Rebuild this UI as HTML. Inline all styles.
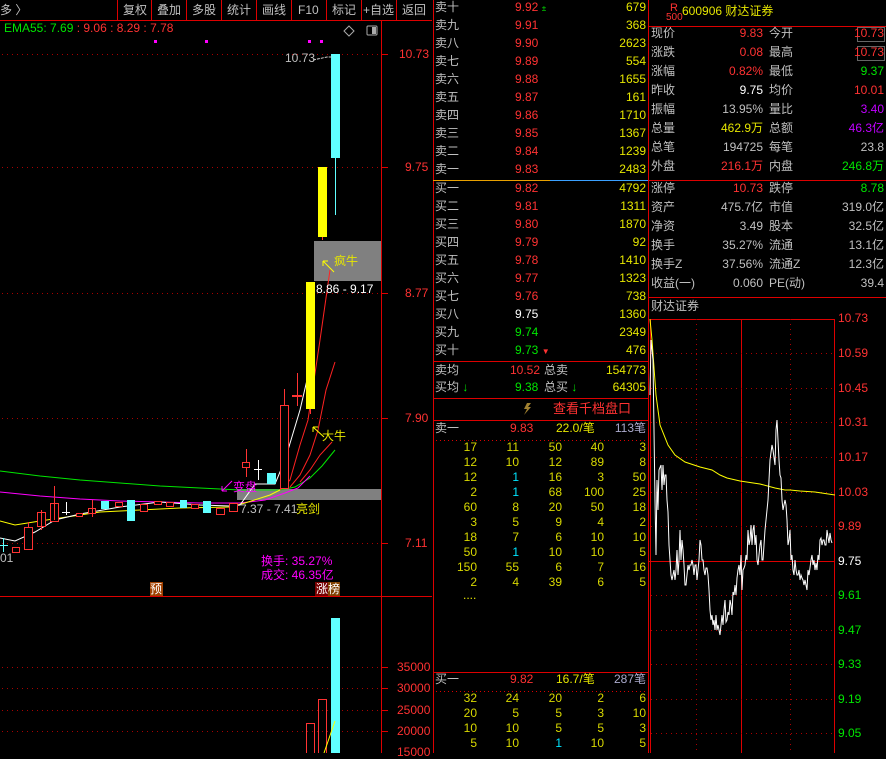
<!DOCTYPE html><html><head><meta charset="utf-8"><style>
*{margin:0;padding:0;box-sizing:border-box}
body{width:886px;height:753px;background:#000;overflow:hidden;position:relative;font-family:"Liberation Sans","Noto Sans CJK SC",sans-serif;font-size:12px;color:#c0c0c0}
.t{position:absolute;white-space:nowrap;line-height:14px}
.r{color:#ff3232}.y{color:#e6e600}.g{color:#00e600}.w{color:#fff}.c{color:#00e5ff}.m{color:#ff00ff}.gr{color:#c0c0c0}
.ra{text-align:right}
svg{position:absolute;left:0;top:0}
</style></head><body>
<svg width="886" height="753">
<!-- toolbar -->
<line x1="0" y1="20.5" x2="432" y2="20.5" stroke="#d00" />
<g stroke="#d00"><line x1="117.5" y1="0" x2="117.5" y2="20"/><line x1="151.5" y1="0" x2="151.5" y2="20"/><line x1="186.5" y1="0" x2="186.5" y2="20"/><line x1="221.5" y1="0" x2="221.5" y2="20"/><line x1="256.5" y1="0" x2="256.5" y2="20"/><line x1="291.5" y1="0" x2="291.5" y2="20"/><line x1="326.5" y1="0" x2="326.5" y2="20"/><line x1="361.5" y1="0" x2="361.5" y2="20"/><line x1="396.5" y1="0" x2="396.5" y2="20"/></g>
<!-- main chart axes -->
<line x1="381.5" y1="21" x2="381.5" y2="753" stroke="#d00"/>
<line x1="0" y1="596.5" x2="432" y2="596.5" stroke="#d00"/>
<g stroke="#a00" stroke-dasharray="1,4">
<line x1="2" y1="54.5" x2="381" y2="54.5"/><line x1="2" y1="167.5" x2="381" y2="167.5"/><line x1="2" y1="293.5" x2="381" y2="293.5"/><line x1="2" y1="418.5" x2="381" y2="418.5"/><line x1="2" y1="543.5" x2="381" y2="543.5"/>
<line x1="2" y1="667.5" x2="381" y2="667.5"/><line x1="2" y1="688.5" x2="381" y2="688.5"/><line x1="2" y1="710.5" x2="381" y2="710.5"/><line x1="2" y1="731.5" x2="381" y2="731.5"/>
</g>
<g stroke="#d00"><line x1="381" y1="54.5" x2="388" y2="54.5"/><line x1="381" y1="167.5" x2="388" y2="167.5"/><line x1="381" y1="293.5" x2="388" y2="293.5"/><line x1="381" y1="418.5" x2="388" y2="418.5"/><line x1="381" y1="543.5" x2="388" y2="543.5"/><line x1="381" y1="667.5" x2="388" y2="667.5"/><line x1="381" y1="688.5" x2="388" y2="688.5"/><line x1="381" y1="710.5" x2="388" y2="710.5"/><line x1="381" y1="731.5" x2="388" y2="731.5"/></g>
<g fill="#f0f"><rect x="154" y="40" width="3" height="3"/><rect x="205" y="40" width="3" height="3"/><rect x="308" y="40" width="3" height="3"/><rect x="320" y="40" width="3" height="3"/></g>
<path d="M349 26 l5 5 l-5 5 l-5 -5z" fill="none" stroke="#aaa"/>
<rect x="367" y="26" width="10" height="9" rx="1" fill="none" stroke="#aaa"/><rect x="372" y="27" width="4" height="7" fill="#aaa"/>
<!-- gray boxes -->
<rect x="314" y="241" width="67" height="40" fill="#808080"/>
<rect x="237" y="489" width="144" height="11" fill="#808080"/>
<!-- MAs -->
<polyline fill="none" stroke="#00e600" points="0,471 40,476 80,480 120,483 160,486 200,488 240,490 280,490 295,487 310,478 322,466 335,450"/>
<polyline fill="none" stroke="#f0f" points="0,492 40,496 80,499 120,501 160,502 200,503 240,503 265,500 285,493 298,488 310,476"/>
<polyline fill="none" stroke="#ff0" points="0,521 15,525 40,521 60,518 100,512 140,510 180,508 230,507 245,503 270,495 280,490 285,482"/>
<polyline fill="none" stroke="#fff" points="0,538 15,541 35,532 55,520 80,514 120,507 160,502 200,505 230,506 240,505 255,484 275,484 285,460 300,410 310,367"/>
<polyline fill="none" stroke="#f22" points="280,490 290,480 300,445 308,420 320,340 330,270"/>
<polyline fill="none" stroke="#f22" points="290,487 300,475 310,455 318,430 326,390 335,362"/>
<polyline fill="none" stroke="#f22" points="300,482 310,470 320,455 332,442"/>
<!-- candles -->
<g stroke="#f33" fill="#000">
<rect x="12.5" y="547.5" width="7" height="5"/>
<rect x="24.5" y="527.5" width="8" height="22"/><line x1="28.5" y1="522" x2="28.5" y2="527"/>
<rect x="37.5" y="512.5" width="8" height="14"/><line x1="41.5" y1="510" x2="41.5" y2="530"/>
<rect x="50.5" y="503.5" width="8" height="18"/><line x1="54.5" y1="486" x2="54.5" y2="520"/>
<rect x="76.5" y="513.5" width="6" height="3"/>
<rect x="88.5" y="508.5" width="7" height="5"/><line x1="92.5" y1="500" x2="92.5" y2="517"/>
<rect x="115.5" y="502.5" width="7" height="4"/>
<rect x="140.5" y="504.5" width="7" height="7"/>
<rect x="154.5" y="501.5" width="7" height="3"/>
<rect x="166.5" y="502.5" width="7" height="4"/>
<rect x="191.5" y="504.5" width="7" height="4"/>
<rect x="216.5" y="508.5" width="8" height="6"/>
<rect x="229.5" y="503.5" width="8" height="8"/>
<rect x="242.5" y="462.5" width="7" height="5"/><line x1="246.5" y1="449" x2="246.5" y2="462"/><line x1="246.5" y1="468" x2="246.5" y2="477"/>
<rect x="280.5" y="405.5" width="8" height="83"/><line x1="284.5" y1="389" x2="284.5" y2="405"/>
<line x1="292" y1="396" x2="302" y2="396" stroke-width="2"/><line x1="297.5" y1="373" x2="297.5" y2="406"/>
<line x1="322.5" y1="237" x2="322.5" y2="240"/><line x1="310.5" y1="409" x2="310.5" y2="414"/>
</g>
<g fill="#60ffff">
<rect x="101" y="501" width="8" height="8"/><rect x="127" y="500" width="8" height="21"/><rect x="180" y="500" width="7" height="8"/><rect x="203" y="501" width="8" height="12"/><rect x="267" y="473" width="9" height="11"/>
<rect x="331" y="54" width="9" height="104"/><rect x="335" y="157" width="1" height="58"/>
<rect x="331" y="618" width="9" height="135"/>
</g>
<g stroke="#60ffff"><line x1="0" y1="545.5" x2="8" y2="545.5"/><line x1="3.5" y1="538" x2="3.5" y2="552"/></g>
<g stroke="#fff"><line x1="62" y1="512.5" x2="70" y2="512.5"/><line x1="66.5" y1="502" x2="66.5" y2="515"/><line x1="254" y1="469.5" x2="262" y2="469.5"/><line x1="258.5" y1="460" x2="258.5" y2="480"/></g>
<g fill="#ff0"><rect x="306" y="282" width="9" height="127"/><rect x="318" y="167" width="9" height="70"/></g>
<path d="M313 60 l14 -3 l5 0" stroke="#ccc" fill="none" stroke-dasharray="3,1"/>
<g fill="none" stroke="#f33"><rect x="306.5" y="723.5" width="8" height="30"/><rect x="318.5" y="699.5" width="8" height="54"/></g>
<line x1="324" y1="753" x2="335" y2="721" stroke="#ff0"/>
<!-- arrows -->
<path d="M334 272 l-11 -11 M323 261 l0 5 M323 261 l5 0" stroke="#ff0" fill="none"/>
<path d="M324 437 l-11 -10 M313 427 l0 5 M313 427 l5 0" stroke="#ff0" fill="none"/>
<path d="M232 481 l-10 10 M222 491 l0 -5 M222 491 l5 0" stroke="#f0f" fill="none"/>
<!-- labels boxes -->
<rect x="150" y="582" width="13" height="14" fill="#a04000"/>
<rect x="315" y="582" width="14" height="14" fill="#700"/><rect x="328" y="582" width="12" height="14" fill="#804000"/>
<!-- order book -->
<line x1="433.5" y1="0" x2="433.5" y2="753" stroke="#d00"/>
<line x1="648.5" y1="0" x2="648.5" y2="753" stroke="#d00"/>
<line x1="433" y1="180.5" x2="550" y2="180.5" stroke="#e8a000"/><line x1="550" y1="180.5" x2="648" y2="180.5" stroke="#3aa0ff"/>
<g stroke="#d00"><line x1="433" y1="361.5" x2="648" y2="361.5"/><line x1="433" y1="398.5" x2="648" y2="398.5"/><line x1="433" y1="420.5" x2="648" y2="420.5"/><line x1="433" y1="672.5" x2="648" y2="672.5"/></g>
<g stroke="#d00" stroke-dasharray="1,3"><line x1="436" y1="440.5" x2="648" y2="440.5"/><line x1="436" y1="691.5" x2="648" y2="691.5"/></g>
<path d="M527 403 l-3 6 l3 0 l-3 6 l7 -8 l-3 0 l3 -4z" fill="#a08030"/>
<!-- right panel -->
<g stroke="#d00"><line x1="648" y1="26.5" x2="886" y2="26.5"/><line x1="648" y1="180.5" x2="886" y2="180.5"/><line x1="648" y1="297.5" x2="886" y2="297.5"/></g>
<g fill="none" stroke="#666"><rect x="857.5" y="27.5" width="27" height="14"/><rect x="857.5" y="46.5" width="27" height="14"/></g>
<rect x="650.5" y="319.5" width="184" height="440" fill="none" stroke="#d00"/>
<line x1="741.5" y1="319" x2="741.5" y2="753" stroke="#d00"/>
<g stroke="#a00" stroke-dasharray="1,4">
<line x1="696.5" y1="319" x2="696.5" y2="753"/><line x1="790.5" y1="319" x2="790.5" y2="753"/>
<line x1="651" y1="353.5" x2="834" y2="353.5"/><line x1="651" y1="388.5" x2="834" y2="388.5"/><line x1="651" y1="422.5" x2="834" y2="422.5"/><line x1="651" y1="457.5" x2="834" y2="457.5"/><line x1="651" y1="492.5" x2="834" y2="492.5"/><line x1="651" y1="526.5" x2="834" y2="526.5"/><line x1="651" y1="595.5" x2="834" y2="595.5"/><line x1="651" y1="630.5" x2="834" y2="630.5"/><line x1="651" y1="664.5" x2="834" y2="664.5"/><line x1="651" y1="699.5" x2="834" y2="699.5"/><line x1="651" y1="733.5" x2="834" y2="733.5"/>
</g>
<line x1="648" y1="561.5" x2="834" y2="561.5" stroke="#d00"/>
<polyline fill="none" stroke="#ff0" points="650,319 652,340 656,395 660,425 668,445 675,455 685,462 700,467 712,470 720,475 727,478 740,481 760,484 775,488 785,490 790,490 800,491 815,492 835,495"/>
<polyline fill="none" stroke="#fff" points="650,395 651,340 653,360 655,500 656,555 657,480 658,510 659,470 661,465 662,490 663,465 664,485 665,475 666,475 667,500 668,512 669,545 670,560 671,575 672,580 673,575 674,570 675,580 676,570 677,550 678,575 679,560 680,530 681,560 682,540 683,550 684,565 685,585 686,585 687,575 688,565 689,570 690,565 691,565 692,560 693,565 694,575 695,565 696,565 697,580 698,570 699,560 700,540 701,545 702,560 703,560 704,570 705,575 706,568 707,568 708,575 709,590 710,610 711,620 712,615 713,625 714,620 715,630 716,615 717,630 718,625 719,630 720,635 721,625 722,615 723,625 724,610 725,600 726,622 727,620 728,612 729,615 730,600 731,605 732,615 733,592 734,595 735,585 736,595 737,578 738,570 739,565 740,575 741,555 742,590 743,570 744,568 745,565 746,555 747,560 748,530 749,545 750,540 751,525 752,545 753,530 754,525 755,545 756,535 757,560 758,565 759,555 760,545 761,540 762,560 763,560 764,545 765,530 766,520 767,510 768,500 769,480 770,460 772,445 773,450 775,465 776,430 777,420 778,440 779,460 780,475 781,478 782,500 783,510 784,505 785,500 786,505 787,520 788,545 789,540 790,530 791,560 792,555 793,570 794,575 795,560 796,570 797,575 798,575 799,570 800,580 801,575 802,578 803,580 804,585 805,580 806,585 807,590 808,570 809,575 810,568 811,560 812,555 813,565 814,560 815,570 816,563 817,570 818,555 819,560 820,540 821,538 822,545 823,540 824,540 825,545 826,545 827,530 828,537 829,543 830,533 831,540 832,543"/>
</svg>

<!-- toolbar text -->
<div class="t gr" style="left:0;top:3px">多 〉</div>
<div class="t gr" style="left:123px;top:3px">复权</div><div class="t gr" style="left:157px;top:3px">叠加</div><div class="t gr" style="left:192px;top:3px">多股</div><div class="t gr" style="left:227px;top:3px">统计</div><div class="t gr" style="left:262px;top:3px">画线</div><div class="t gr" style="left:298px;top:3px">F10</div><div class="t gr" style="left:332px;top:3px">标记</div><div class="t gr" style="left:363px;top:3px">+自选</div><div class="t gr" style="left:402px;top:3px">返回</div>
<div class="t" style="left:4px;top:21px"><span class="g">EMA55: 7.69</span> <span class="r">: 9.06 : 8.29 : 7.78</span></div>
<div class="t gr" style="left:285px;top:51px">10.73</div>
<div class="t w" style="left:316px;top:282px">8.86 - 9.17</div>
<div class="t y" style="left:334px;top:254px">疯牛</div>
<div class="t y" style="left:322px;top:429px">大牛</div>
<div class="t m" style="left:233px;top:480px">变盘</div>
<div class="t gr" style="left:240px;top:502px">7.37 - 7.41</div>
<div class="t y" style="left:296px;top:502px">亮剑</div>
<div class="t gr" style="left:0;top:551px">01</div>
<div class="t m" style="left:261px;top:554px">换手: 35.27%</div>
<div class="t m" style="left:261px;top:568px">成交: 46.35亿</div>
<div class="t w" style="left:150px;top:582px">预</div><div class="t w" style="left:316px;top:582px">涨榜</div>
<!-- main axis -->
<div class="t r" style="left:399px;top:47px">10.73</div><div class="t r" style="left:405px;top:160px">9.75</div><div class="t r" style="left:405px;top:286px">8.77</div><div class="t r" style="left:405px;top:411px">7.90</div><div class="t r" style="left:405px;top:536px">7.11</div>
<div class="t r" style="left:397px;top:660px">35000</div><div class="t r" style="left:397px;top:681px">30000</div><div class="t r" style="left:397px;top:703px">25000</div><div class="t r" style="left:397px;top:724px">20000</div><div class="t r" style="left:397px;top:745px">15000</div>

<!-- order book -->
<div style="position:absolute;left:435px;top:0;width:211px">
<div style="position:relative;height:180px">
<div class="t gr" style="top:0">卖十</div><div class="t r" style="left:80px;top:0">9.92 <span class="g" style="font-size:8px">±</span></div><div class="t y ra" style="right:0;top:0">679</div>
<div class="t gr" style="top:18px">卖九</div><div class="t r" style="left:80px;top:18px">9.91</div><div class="t y ra" style="right:0;top:18px">368</div>
<div class="t gr" style="top:36px">卖八</div><div class="t r" style="left:80px;top:36px">9.90</div><div class="t y ra" style="right:0;top:36px">2623</div>
<div class="t gr" style="top:54px">卖七</div><div class="t r" style="left:80px;top:54px">9.89</div><div class="t y ra" style="right:0;top:54px">554</div>
<div class="t gr" style="top:72px">卖六</div><div class="t r" style="left:80px;top:72px">9.88</div><div class="t y ra" style="right:0;top:72px">1655</div>
<div class="t gr" style="top:90px">卖五</div><div class="t r" style="left:80px;top:90px">9.87</div><div class="t y ra" style="right:0;top:90px">161</div>
<div class="t gr" style="top:108px">卖四</div><div class="t r" style="left:80px;top:108px">9.86</div><div class="t y ra" style="right:0;top:108px">1710</div>
<div class="t gr" style="top:126px">卖三</div><div class="t r" style="left:80px;top:126px">9.85</div><div class="t y ra" style="right:0;top:126px">1367</div>
<div class="t gr" style="top:144px">卖二</div><div class="t r" style="left:80px;top:144px">9.84</div><div class="t y ra" style="right:0;top:144px">1239</div>
<div class="t gr" style="top:162px">卖一</div><div class="t r" style="left:80px;top:162px">9.83</div><div class="t y ra" style="right:0;top:162px">2483</div>
</div>
<div style="position:absolute;top:181px;width:211px">
<div class="t gr" style="top:0">买一</div><div class="t r" style="left:80px;top:0">9.82</div><div class="t y ra" style="right:0;top:0">4792</div>
<div class="t gr" style="top:18px">买二</div><div class="t r" style="left:80px;top:18px">9.81</div><div class="t y ra" style="right:0;top:18px">1311</div>
<div class="t gr" style="top:36px">买三</div><div class="t r" style="left:80px;top:36px">9.80</div><div class="t y ra" style="right:0;top:36px">1870</div>
<div class="t gr" style="top:54px">买四</div><div class="t r" style="left:80px;top:54px">9.79</div><div class="t y ra" style="right:0;top:54px">92</div>
<div class="t gr" style="top:72px">买五</div><div class="t r" style="left:80px;top:72px">9.78</div><div class="t y ra" style="right:0;top:72px">1410</div>
<div class="t gr" style="top:90px">买六</div><div class="t r" style="left:80px;top:90px">9.77</div><div class="t y ra" style="right:0;top:90px">1323</div>
<div class="t gr" style="top:108px">买七</div><div class="t r" style="left:80px;top:108px">9.76</div><div class="t y ra" style="right:0;top:108px">738</div>
<div class="t gr" style="top:126px">买八</div><div class="t w" style="left:80px;top:126px">9.75</div><div class="t y ra" style="right:0;top:126px">1360</div>
<div class="t gr" style="top:144px">买九</div><div class="t g" style="left:80px;top:144px">9.74</div><div class="t y ra" style="right:0;top:144px">2349</div>
<div class="t gr" style="top:162px">买十</div><div class="t g" style="left:80px;top:162px">9.73 <span class="r" style="font-size:8px">▼</span></div><div class="t y ra" style="right:0;top:162px">476</div>
<div class="t gr" style="top:182px">卖均</div><div class="t r" style="left:75px;top:182px">10.52</div><div class="t gr" style="left:109px;top:182px">总卖</div><div class="t y ra" style="right:0;top:182px">154773</div>
<div class="t gr" style="top:199px">买均 <span class="g">↓</span></div><div class="t g" style="left:80px;top:199px">9.38</div><div class="t gr" style="left:109px;top:199px">总买 <span class="g">↓</span></div><div class="t y ra" style="right:0;top:199px">64305</div>
</div>
<div class="t r" style="left:118px;top:402px;font-size:13px">查看千档盘口</div>
<div class="t gr" style="top:421px">卖一</div><div class="t r" style="left:75px;top:421px">9.83</div><div class="t y" style="left:121px;top:421px">22.0/笔</div><div class="t ra" style="right:0;top:421px;color:#aac">113笔</div>
<div class="t gr" style="top:672px">买一</div><div class="t r" style="left:75px;top:672px">9.82</div><div class="t y" style="left:121px;top:672px">16.7/笔</div><div class="t ra" style="right:0;top:672px;color:#aac">287笔</div>
</div>
<div id="grid1" style="position:absolute;left:435px;top:440px;width:211px;font-size:12px;line-height:15px">
<style>.gr5{display:grid;grid-template-columns:42px 42px 43px 42px 42px;text-align:right;color:#d8d800;line-height:15px;height:15px}.gr5 .c{color:#00e5ff}</style>
<div class="gr5"><span>17</span><span>11</span><span>50</span><span>40</span><span>3</span></div>
<div class="gr5"><span>12</span><span>10</span><span>12</span><span>89</span><span>8</span></div>
<div class="gr5"><span>12</span><span class="c">1</span><span>16</span><span>3</span><span>50</span></div>
<div class="gr5"><span>2</span><span class="c">1</span><span>68</span><span>100</span><span>25</span></div>
<div class="gr5"><span>60</span><span>8</span><span>20</span><span>50</span><span>18</span></div>
<div class="gr5"><span>3</span><span>5</span><span>9</span><span>4</span><span>2</span></div>
<div class="gr5"><span>18</span><span>7</span><span>6</span><span>10</span><span>10</span></div>
<div class="gr5"><span>50</span><span class="c">1</span><span>10</span><span>10</span><span>5</span></div>
<div class="gr5"><span>150</span><span>55</span><span>6</span><span>7</span><span>16</span></div>
<div class="gr5"><span>2</span><span>4</span><span>39</span><span>6</span><span>5</span></div>
<div class="t y" style="left:28px;top:148px">....</div>
</div>
<div style="position:absolute;left:435px;top:691px;width:211px">
<div class="gr5"><span>32</span><span>24</span><span>20</span><span>2</span><span>6</span></div>
<div class="gr5"><span>20</span><span>5</span><span>5</span><span>3</span><span>10</span></div>
<div class="gr5"><span>10</span><span>10</span><span>5</span><span>5</span><span>3</span></div>
<div class="gr5"><span>5</span><span>10</span><span class="c">1</span><span>10</span><span>5</span></div>
</div>

<!-- right panel -->
<div class="t r" style="left:670px;top:1px;font-size:11px">R</div>
<div class="t r" style="left:666px;top:11px;font-size:10px">500</div>
<div class="t y" style="left:682px;top:4px">600906 财达证券</div>
<div style="position:absolute;left:651px;top:26px;width:233px">
<div class="t gr" style="top:0">现价</div><div class="t r ra" style="right:121px;top:0">9.83</div><div class="t gr" style="left:118px;top:0">今开</div><div class="t r ra" style="right:0;top:0">10.73</div>
<div class="t gr" style="top:19px">涨跌</div><div class="t r ra" style="right:121px;top:19px">0.08</div><div class="t gr" style="left:118px;top:19px">最高</div><div class="t r ra" style="right:0;top:19px">10.73</div>
<div class="t gr" style="top:38px">涨幅</div><div class="t r ra" style="right:121px;top:38px">0.82%</div><div class="t gr" style="left:118px;top:38px">最低</div><div class="t g ra" style="right:0;top:38px">9.37</div>
<div class="t gr" style="top:57px">昨收</div><div class="t w ra" style="right:121px;top:57px">9.75</div><div class="t gr" style="left:118px;top:57px">均价</div><div class="t r ra" style="right:0;top:57px">10.01</div>
<div class="t gr" style="top:76px">振幅</div><div class="t gr ra" style="right:121px;top:76px">13.95%</div><div class="t gr" style="left:118px;top:76px">量比</div><div class="t ra" style="right:0;top:76px;color:#c000ff">3.40</div>
<div class="t gr" style="top:95px">总量</div><div class="t y ra" style="right:121px;top:95px">462.9万</div><div class="t gr" style="left:118px;top:95px">总额</div><div class="t ra" style="right:0;top:95px;color:#c000ff">46.3亿</div>
<div class="t gr" style="top:114px">总笔</div><div class="t gr ra" style="right:121px;top:114px">194725</div><div class="t gr" style="left:118px;top:114px">每笔</div><div class="t gr ra" style="right:0;top:114px">23.8</div>
<div class="t gr" style="top:133px">外盘</div><div class="t r ra" style="right:121px;top:133px">216.1万</div><div class="t gr" style="left:118px;top:133px">内盘</div><div class="t g ra" style="right:0;top:133px">246.8万</div>
<div class="t gr" style="top:155px">涨停</div><div class="t r ra" style="right:121px;top:155px">10.73</div><div class="t gr" style="left:118px;top:155px">跌停</div><div class="t g ra" style="right:0;top:155px">8.78</div>
<div class="t gr" style="top:174px">资产</div><div class="t gr ra" style="right:121px;top:174px">475.7亿</div><div class="t gr" style="left:118px;top:174px">市值</div><div class="t gr ra" style="right:0;top:174px">319.0亿</div>
<div class="t gr" style="top:193px">净资</div><div class="t gr ra" style="right:121px;top:193px">3.49</div><div class="t gr" style="left:118px;top:193px">股本</div><div class="t gr ra" style="right:0;top:193px">32.5亿</div>
<div class="t gr" style="top:212px">换手</div><div class="t gr ra" style="right:121px;top:212px">35.27%</div><div class="t gr" style="left:118px;top:212px">流通</div><div class="t gr ra" style="right:0;top:212px">13.1亿</div>
<div class="t gr" style="top:231px">换手Z</div><div class="t gr ra" style="right:121px;top:231px">37.56%</div><div class="t gr" style="left:118px;top:231px">流通Z</div><div class="t gr ra" style="right:0;top:231px">12.3亿</div>
<div class="t gr" style="top:250px">收益(一)</div><div class="t gr ra" style="right:121px;top:250px">0.060</div><div class="t gr" style="left:118px;top:250px">PE(动)</div><div class="t gr ra" style="right:0;top:250px">39.4</div>
</div>
<div class="t gr" style="left:651px;top:299px">财达证券</div>
<div class="t r" style="left:838px;top:311px">10.73</div><div class="t r" style="left:838px;top:346px">10.59</div><div class="t r" style="left:838px;top:381px">10.45</div><div class="t r" style="left:838px;top:415px">10.31</div><div class="t r" style="left:838px;top:450px">10.17</div><div class="t r" style="left:838px;top:485px">10.03</div><div class="t r" style="left:838px;top:519px">9.89</div><div class="t w" style="left:838px;top:554px">9.75</div><div class="t g" style="left:838px;top:588px">9.61</div><div class="t g" style="left:838px;top:623px">9.47</div><div class="t g" style="left:838px;top:657px">9.33</div><div class="t g" style="left:838px;top:692px">9.19</div><div class="t g" style="left:838px;top:726px">9.05</div>
</body></html>
